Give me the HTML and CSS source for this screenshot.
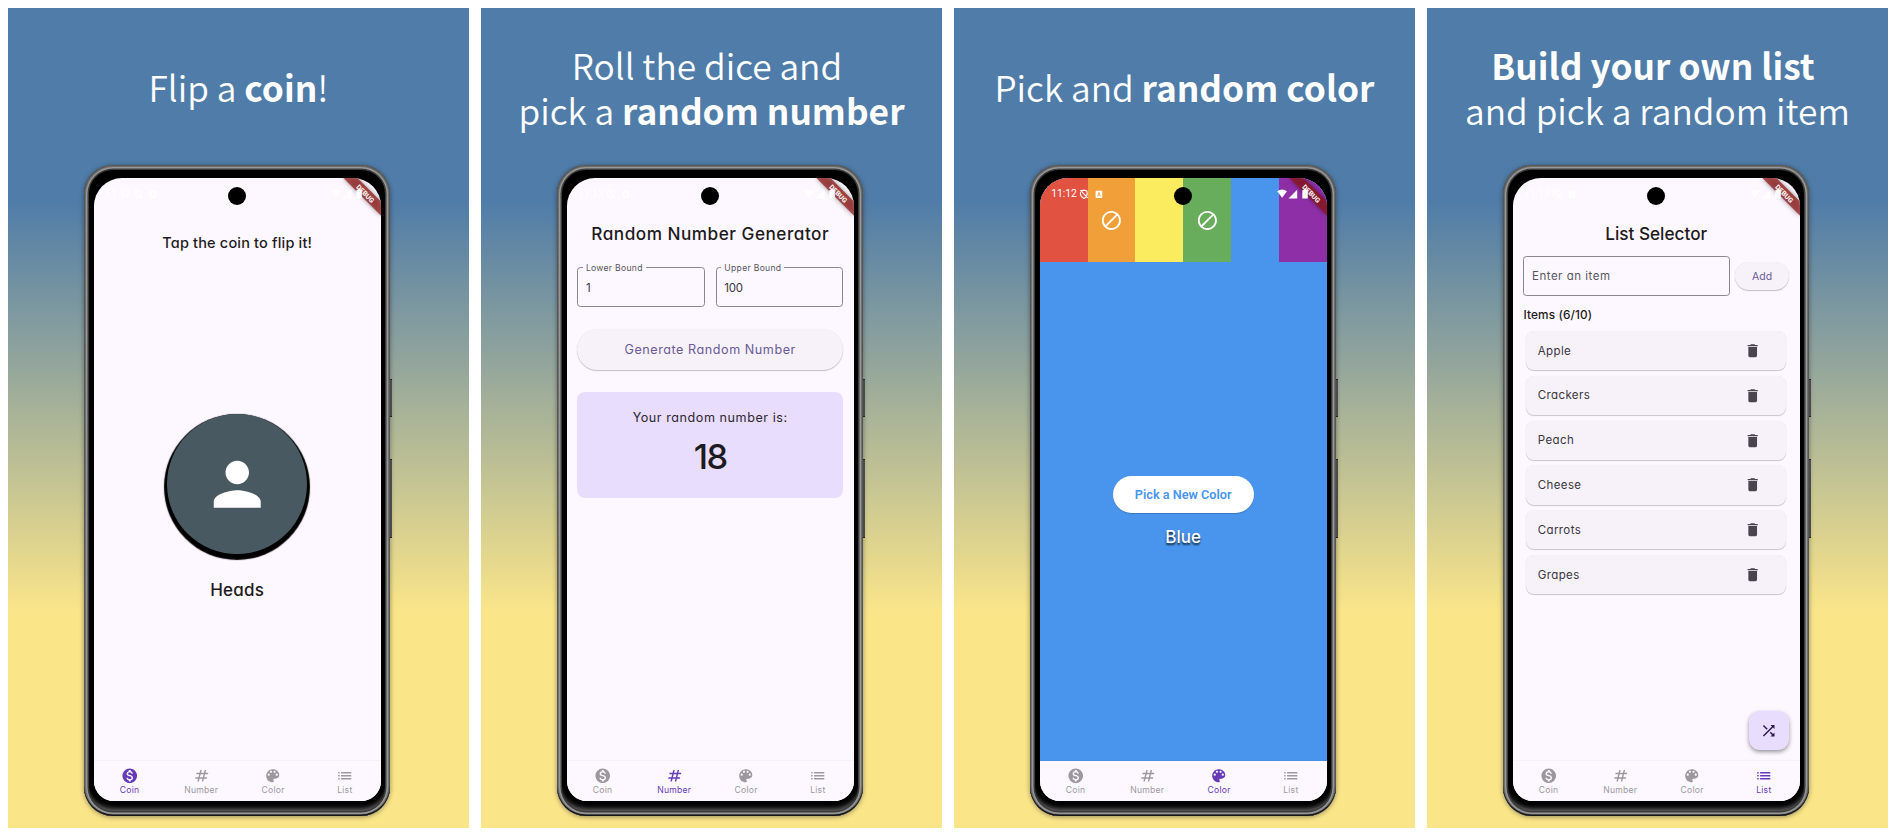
FILE: index.html
```html
<!DOCTYPE html>
<html lang="en">
<head>
<meta charset="utf-8">
<title>Random Picker</title>
<link rel="stylesheet" href="styles.css">
</head>
<body>
<svg class="sprite" aria-hidden="true">
  <symbol id="i-coin" viewBox="0 0 24 24"><path d="M12 2C6.48 2 2 6.48 2 12s4.48 10 10 10 10-4.48 10-10S17.52 2 12 2zm1.41 16.09V20h-2.67v-1.93c-1.71-.36-3.16-1.46-3.27-3.4h1.96c.1 1.05.82 1.87 2.65 1.87 1.96 0 2.4-.98 2.4-1.59 0-.83-.44-1.61-2.67-2.14-2.48-.6-4.18-1.62-4.18-3.67 0-1.72 1.39-2.84 3.11-3.21V4h2.67v1.95c1.86.45 2.79 1.86 2.85 3.39H14.3c-.05-1.11-.64-1.87-2.22-1.87-1.5 0-2.4.68-2.4 1.64 0 .84.65 1.39 2.67 1.91s4.18 1.39 4.18 3.91c-.01 1.83-1.38 2.83-3.12 3.16z"/></symbol>
  <symbol id="i-number" viewBox="0 0 24 24"><path d="M20.5 10 21 8h-4l1-4h-2l-1 4h-4l1-4h-2L9 8H5l-.5 2h4l-1 4h-4L3 16h4l-1 4h2l1-4h4l-1 4h2l1-4h4l.5-2h-4l1-4h4zm-7 4h-4l1-4h4l-1 4z"/></symbol>
  <symbol id="i-color" viewBox="0 0 24 24"><path d="M12 3c-4.97 0-9 4.03-9 9s4.03 9 9 9c.83 0 1.5-.67 1.5-1.5 0-.39-.15-.74-.39-1.01-.23-.26-.38-.61-.38-.99 0-.83.67-1.5 1.5-1.5H16c2.76 0 5-2.24 5-5 0-4.42-4.03-8-9-8zm-5.5 9c-.83 0-1.5-.67-1.5-1.5S5.67 9 6.5 9 8 9.67 8 10.5 7.33 12 6.5 12zm3-4C8.67 8 8 7.33 8 6.5S8.67 5 9.5 5s1.5.67 1.5 1.5S10.33 8 9.5 8zm5 0c-.83 0-1.5-.67-1.5-1.5S13.67 5 14.5 5s1.5.67 1.5 1.5S15.33 8 14.5 8zm3 4c-.83 0-1.5-.67-1.5-1.5S16.67 9 17.5 9s1.5.67 1.5 1.5-.67 1.5-1.5 1.5z"/></symbol>
  <symbol id="i-list" viewBox="0 0 24 24"><path d="M3 13h2v-2H3v2zm0 4h2v-2H3v2zm0-8h2V7H3v2zm4 4h14v-2H7v2zm0 4h14v-2H7v2zM7 7v2h14V7H7z"/></symbol>
  <symbol id="i-delete" viewBox="0 0 24 24"><path d="M6 19c0 1.1.9 2 2 2h8c1.1 0 2-.9 2-2V7H6v12zM19 4h-3.5l-1-1h-5l-1 1H5v2h14V4z"/></symbol>
  <symbol id="i-shuffle" viewBox="0 0 24 24"><path d="M10.59 9.17L5.41 4 4 5.41l5.17 5.17 1.42-1.41zM14.5 4l2.04 2.04L4 18.59 5.41 20 17.96 7.46 20 9.5V4h-5.5zm.33 9.41l-1.41 1.41 3.13 3.13L14.5 20H20v-5.5l-2.04 2.04-3.13-3.13z"/></symbol>
  <symbol id="i-person" viewBox="0 0 24 24"><path d="M12 12c2.21 0 4-1.79 4-4s-1.79-4-4-4-4 1.79-4 4 1.79 4 4 4zm0 2c-2.67 0-8 1.34-8 4v2h16v-2c0-2.66-5.33-4-8-4z"/></symbol>
  <symbol id="i-block" viewBox="0 0 24 24"><path d="M12 2C6.5 2 2 6.5 2 12s4.500 10 10 10 10-4.500 10-10S17.500 2 12 2zM4 12c0-4.400 3.600-8 8-8 1.800 0 3.500.600 4.900 1.700L5.700 16.900C4.600 15.500 4 13.800 4 12zm8 8c-1.800 0-3.500-.600-4.900-1.700L18.300 7.100C19.400 8.500 20 10.200 20 12c0 4.400-3.600 8-8 8z"/></symbol>
  <symbol id="i-status" viewBox="0 0 287 42">
    <g fill="none" stroke="#fff" stroke-width="1.100"><path d="M41.200 12.900 43.900 12.100 46.900 12.900Q48.200 18.600 43.900 20.500 39.800 18.300 40.500 14.200M40.200 12.200 47.800 19.800"/></g>
    <path fill="#fff" fill-rule="evenodd" d="M56.400 12.700h5.100q.8 0 .8.800v5.700q0 .8-.8.800h-5.100q-.8 0-.8-.8v-5.700q0-.8.8-.8zM58.500 14.200 57.200 18.500h.8l.3-1h1.300l.3 1h.8L59.400 14.200zM58.950 15.200 59.350 16.800h-.8z"/>
    <path fill="#fff" d="M237.200 13.300Q242.100 9.700 247 13.300L242.100 19.800zM257.200 11.700v8.700h-8.700zM262.300 12.500q0-.6.600-.6h.9v-1h2.500v1h.9q.6 0 .6.600v7.400q0 .7-.6.700h-4.300q-.6 0-.6-.7z"/>
  </symbol>
  <symbol id="i-ribbon" viewBox="0 0 287 42">
    <path d="M249.300 0H263.500L288 24.500V38.700z"/>
  </symbol>
</svg>

<main class="gallery">

  <section class="panel">
    <h2 class="headline"><span>Flip a <b>coin</b>!</span></h2>
    <div class="phone">
      <i class="key key-a"></i><i class="key key-b"></i>
      <div class="screen">
        <div class="body coin-body">
          <p class="prompt">Tap the coin to flip it!</p>
          <div class="coin"><svg class="ic-person"><use href="#i-person"/></svg></div>
          <p class="side">Heads</p>
        </div>
        <nav class="tabs">
          <a class="tab on"><svg><use href="#i-coin"/></svg><span>Coin</span></a>
          <a class="tab"><svg><use href="#i-number"/></svg><span>Number</span></a>
          <a class="tab"><svg><use href="#i-color"/></svg><span>Color</span></a>
          <a class="tab"><svg><use href="#i-list"/></svg><span>List</span></a>
        </nav>
        <svg class="ribbon"><use href="#i-ribbon"/></svg>
        <svg class="status"><use href="#i-status"/></svg>
        <span class="debug">DEBUG</span>
        <span class="clock">11:12</span>
        <i class="camera"></i>
      </div>
    </div>
  </section>

  <section class="panel">
    <h2 class="headline"><span class="first-line">Roll the dice and</span><span>pick a <b>random number</b></span></h2>
    <div class="phone">
      <i class="key key-a"></i><i class="key key-b"></i>
      <div class="screen">
        <div class="body">
          <h3 class="title title-number">Random Number Generator</h3>
          <div class="bounds">
            <fieldset class="bound"><legend>Lower Bound</legend><span>1</span></fieldset>
            <fieldset class="bound"><legend>Upper Bound</legend><span>100</span></fieldset>
          </div>
          <div class="generate">Generate Random Number</div>
          <div class="result">
            <p class="result-label">Your random number is:</p>
            <p class="result-value">18</p>
          </div>
        </div>
        <nav class="tabs">
          <a class="tab"><svg><use href="#i-coin"/></svg><span>Coin</span></a>
          <a class="tab on"><svg><use href="#i-number"/></svg><span>Number</span></a>
          <a class="tab"><svg><use href="#i-color"/></svg><span>Color</span></a>
          <a class="tab"><svg><use href="#i-list"/></svg><span>List</span></a>
        </nav>
        <svg class="ribbon"><use href="#i-ribbon"/></svg>
        <svg class="status"><use href="#i-status"/></svg>
        <span class="debug">DEBUG</span>
        <span class="clock">11:12</span>
        <i class="camera"></i>
      </div>
    </div>
  </section>

  <section class="panel">
    <h2 class="headline"><span>Pick and <b>random color</b></span></h2>
    <div class="phone">
      <i class="key key-a"></i><i class="key key-b"></i>
      <div class="screen">
        <div class="body color-body">
          <div class="stripes">
            <i class="stripe red"></i>
            <i class="stripe orange"><svg><use href="#i-block"/></svg></i>
            <i class="stripe yellow"></i>
            <i class="stripe green"><svg><use href="#i-block"/></svg></i>
            <i class="stripe blue"></i>
            <i class="stripe purple"></i>
          </div>
          <div class="pick">Pick a New Color</div>
          <p class="color-name">Blue</p>
        </div>
        <nav class="tabs">
          <a class="tab"><svg><use href="#i-coin"/></svg><span>Coin</span></a>
          <a class="tab"><svg><use href="#i-number"/></svg><span>Number</span></a>
          <a class="tab on"><svg><use href="#i-color"/></svg><span>Color</span></a>
          <a class="tab"><svg><use href="#i-list"/></svg><span>List</span></a>
        </nav>
        <svg class="ribbon"><use href="#i-ribbon"/></svg>
        <svg class="status"><use href="#i-status"/></svg>
        <span class="debug">DEBUG</span>
        <span class="clock">11:12</span>
        <i class="camera"></i>
      </div>
    </div>
  </section>

  <section class="panel">
    <h2 class="headline"><span class="first-line"><b>Build your own list</b></span><span>and pick a random item</span></h2>
    <div class="phone">
      <i class="key key-a"></i><i class="key key-b"></i>
      <div class="screen">
        <div class="body">
          <h3 class="title title-list">List Selector</h3>
          <div class="entry">
            <div class="entry-field">Enter an item</div>
            <div class="add">Add</div>
          </div>
          <p class="count">Items (6/10)</p>
          <ul class="items">
            <li><span>Apple</span><svg><use href="#i-delete"/></svg></li>
            <li><span>Crackers</span><svg><use href="#i-delete"/></svg></li>
            <li><span>Peach</span><svg><use href="#i-delete"/></svg></li>
            <li><span>Cheese</span><svg><use href="#i-delete"/></svg></li>
            <li><span>Carrots</span><svg><use href="#i-delete"/></svg></li>
            <li><span>Grapes</span><svg><use href="#i-delete"/></svg></li>
          </ul>
        </div>
        <nav class="tabs">
          <a class="tab"><svg><use href="#i-coin"/></svg><span>Coin</span></a>
          <a class="tab"><svg><use href="#i-number"/></svg><span>Number</span></a>
          <a class="tab"><svg><use href="#i-color"/></svg><span>Color</span></a>
          <a class="tab on"><svg><use href="#i-list"/></svg><span>List</span></a>
        </nav>
        <div class="fab"><svg><use href="#i-shuffle"/></svg></div>
        <svg class="ribbon"><use href="#i-ribbon"/></svg>
        <svg class="status"><use href="#i-status"/></svg>
        <span class="debug">DEBUG</span>
        <span class="clock">11:13</span>
        <i class="camera"></i>
      </div>
    </div>
  </section>
</main>
</body>
</html>
```
FILE: styles.css
```css
* { box-sizing: border-box; }
html, body { margin: 0; height: 838px; overflow: hidden; background: #fff; }
body { font-family: Inter, Roboto, sans-serif; font-feature-settings: "cv11"; color: #1d1b20; }
p, h2, h3, ul { margin: 0; padding: 0; }
i { font-style: normal; }
svg { fill: currentColor; display: block; }
.sprite { position: absolute; width: 0; height: 0; }

.gallery { display: flex; gap: 12px; padding: 8.4px 0 0 8px; }
.panel {
  flex: none; width: 461px; height: 819.2px; overflow: hidden;
  background: linear-gradient(#4f7ca8 23.500%, #fae589 73.500%);
}
.headline {
  height: 157px; color: #fff;
  display: flex; flex-direction: column; justify-content: center; align-items: center;
  font: 350 35.300px/45px "Noto Sans CJK JP", "Noto Sans", sans-serif;
  white-space: nowrap;
}
.headline b { font-weight: 700; }
.first-line { padding-right: 9px; }

.phone {
  position: relative; width: 305.600px; height: 651px; margin-left: 76.400px;
  padding: 12.600px 9.300px 15.700px; border-radius: 29px; background: #000;
  box-shadow:
    0 1px 5px rgba(0, 0, 0, .4),
    inset 0 -1.500px 0 #161616,
    inset 0 0 0 1px #565656,
    inset 0 0 0 2px #6f6f6f,
    inset 0 0 0 3.500px #979797,
    inset 0 0 0 5px #3a3a3a,
    inset 0 -6px 5px 1px #6a6a6a;
}
.key { position: absolute; right: -2.200px; width: 2.400px; background: #4b4b4b; border-top: 1px solid #222; border-bottom: 1px solid #222; }
.key-a { top: 213.500px; height: 38.500px; }
.key-b { top: 293.500px; height: 79px; }
.screen {
  position: relative; width: 287px; height: 622.700px; overflow: hidden;
  border-radius: 28px 28px 20px 20px; background: #fdf8ff;
  display: flex; flex-direction: column;
}
.body { flex: 1; padding: 0 10.700px; display: flex; flex-direction: column; }

.status, .ribbon { position: absolute; left: 0; top: 0; width: 287px; height: 42px; }
.ribbon { color: rgba(146, 22, 22, .72); filter: drop-shadow(0 0 2.500px rgba(0, 0, 0, .55)); }
.debug {
  position: absolute; left: 256px; top: 12px; width: 30px; text-align: center;
  font: 900 7px/8px Roboto, sans-serif; color: rgba(255, 255, 255, .92); transform: rotate(45deg);
}
.clock { position: absolute; left: 11.500px; top: 10px; font: 400 10.300px/12px Roboto, sans-serif; color: #fff; }
.camera { position: absolute; left: 134.500px; top: 9px; width: 18px; height: 18px; border-radius: 50%; background: #000; }

.tabs { height: 39.600px; display: grid; grid-template-columns: repeat(4, 1fr); background: #fdf8ff; box-shadow: 0 -1px 1px rgba(0, 0, 0, .025); }
.tab { display: flex; flex-direction: column; align-items: center; padding-top: 5.600px; color: #9b999d; font-size: 8.600px; line-height: 11px; letter-spacing: .25px; }
.tab svg { width: 17.500px; height: 17.500px; margin-bottom: .4px; }
.tab.on { color: #673ab7; }

.coin-body { align-items: center; }
.prompt { margin-top: 55px; font-size: 14.500px; font-weight: 500; line-height: 20px; letter-spacing: .18px; }
.coin {
  margin-top: 161.300px; width: 140px; height: 140px; border-radius: 50%;
  background: #495962; color: #fff; box-shadow: 0 3px 1px 3px #000;
  display: flex; align-items: center; justify-content: center;
}
.ic-person { width: 70.500px; height: 70.500px; }
.side { margin-top: 25.500px; font-size: 17px; font-weight: 500; line-height: 20px; letter-spacing: .2px; }

.title { margin-top: 44.500px; text-align: center; font-size: 17.200px; font-weight: 500; line-height: 24px; white-space: nowrap; }
.title-number { letter-spacing: .5px; }

.bounds { display: flex; gap: 11.300px; margin-top: 15.200px; }
.bound { flex: 1; min-width: 0; margin: 0; height: 45.300px; padding: 7.300px 0 0 7.500px; border: 1px solid #8b8790; border-radius: 3.500px; font-size: 11.500px; line-height: 14px; color: #3a373e; letter-spacing: -.3px; }
.bound legend { margin-left: -3px; padding: 0 3px; font-size: 8.600px; line-height: 12px; color: #5a565f; letter-spacing: .3px; }
.generate, .add {
  display: flex; align-items: center; justify-content: center; border-radius: 21px;
  background: #f7f2fa; color: #6a5a96; box-shadow: 0 1px 1px rgba(0, 0, 0, .22), 0 0 1px rgba(0, 0, 0, .1);
}
.generate { margin-top: 21.700px; height: 41.300px; font-size: 12.600px; letter-spacing: .55px; }
.result { margin-top: 22px; height: 105.700px; border-radius: 8px; background: #e8ddfc; text-align: center; padding-top: 15.800px; }
.result-label { font-size: 12.600px; line-height: 20px; color: #2b2831; letter-spacing: .55px; }
.result-value { margin-top: 9px; font-size: 34.500px; font-weight: 500; line-height: 40px; letter-spacing: -1.500px; }

.color-body { background: #4995ed; padding: 0; align-items: center; }
.stripes { align-self: stretch; height: 84px; display: grid; grid-template-columns: repeat(6, 1fr); color: #fff; }
.stripe svg { width: 22.800px; height: 22.800px; margin: 30.600px auto 0; }
.red { background: #e15241; }
.orange { background: #f19f39; }
.yellow { background: #fbec5f; }
.green { background: #68ad5b; }
.purple { background: #8f2fa8; }
.pick { margin-top: 214px; width: 141px; height: 37.200px; border-radius: 19px; background: #fff; color: #4995ed; display: flex; align-items: center; justify-content: center; font: 600 12.700px Roboto, sans-serif; box-shadow: 0 1px 1px rgba(0, 0, 0, .2); }
.color-name { margin-top: 11.900px; font-size: 17px; font-weight: 500; line-height: 24px; color: #fff; text-shadow: 0 1.500px 2px rgba(0, 0, 0, .75); }

.entry { display: flex; align-items: center; gap: 5.300px; margin-top: 10px; }
.entry-field { width: 206.400px; height: 39.400px; border: 1px solid #8b8790; border-radius: 3.500px; padding-left: 7.700px; display: flex; align-items: center; font-size: 11.500px; color: #5a565f; letter-spacing: .5px; }
.add { width: 54px; height: 28.500px; font-size: 10.500px; }
.count { margin-top: 11px; font-size: 11.800px; font-weight: 500; line-height: 16px; letter-spacing: .15px; }
.items { list-style: none; margin: 8.100px 2.700px 0 2.400px; display: grid; gap: 5.400px; }
.items li { height: 39.400px; border-radius: 8px; background: #f7f2fa; box-shadow: 0 1px 1px rgba(0, 0, 0, .2), 0 0 1px rgba(0, 0, 0, .08); display: flex; align-items: center; justify-content: space-between; padding: 0 25px 0 12px; font-size: 11.500px; color: #3a373e; letter-spacing: .38px; }
.items svg { width: 17.400px; height: 17.400px; color: #49454f; }
.fab { position: absolute; right: 10.900px; bottom: 50.300px; width: 39.400px; height: 39.400px; border-radius: 11px; background: #e8ddfc; color: #2a1a52; box-shadow: 0 2px 4px rgba(0, 0, 0, .4); display: flex; align-items: center; justify-content: center; }
.fab svg { width: 17.400px; height: 17.400px; }
```
